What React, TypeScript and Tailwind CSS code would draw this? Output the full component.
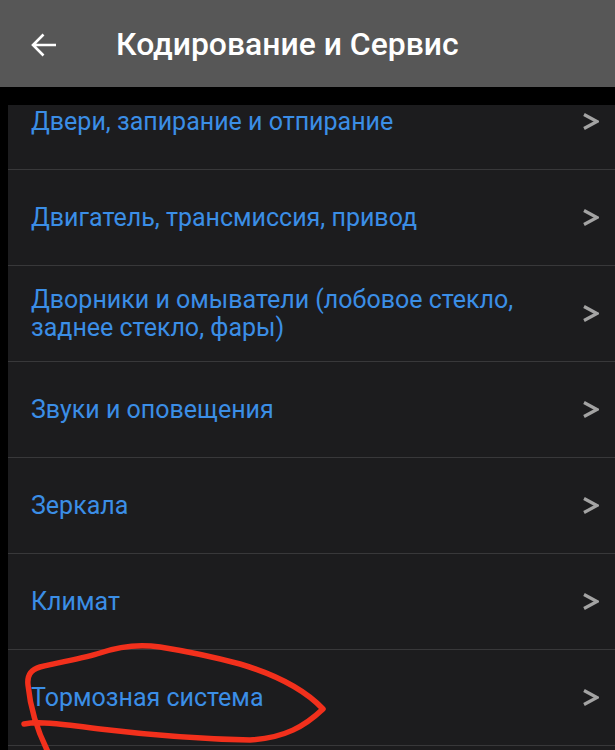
import React from 'react';

const items: string[][] = [
  ['Двери, запирание и отпирание'],
  ['Двигатель, трансмиссия, привод'],
  ['Дворники и омыватели (лобовое стекло,', 'заднее стекло, фары)'],
  ['Звуки и оповещения'],
  ['Зеркала'],
  ['Климат'],
  ['Тормозная система'],
];

const Chevron = () => (
  <svg width="17" height="19" viewBox="0 0 17 19" fill="none" className="shrink-0">
    <polyline points="2,2.5 15,9.5 2,16.5" stroke="#a3a3a3" strokeWidth="3.2" strokeLinejoin="miter" />
  </svg>
);

const Row = ({ lines }: { lines: string[] }) => (
  <div className="h-[96px] flex items-center justify-between pl-[23px] pr-[16px] border-b border-[#38383a]">
    <div className="text-[25px] leading-[28px] text-[#3b8ee6]">
      {lines.map((l) => (
        <div key={l}>{l}</div>
      ))}
    </div>
    <Chevron />
  </div>
);

export default function App() {
  return (
    <div
      className="relative w-[615px] h-[750px] overflow-hidden bg-black"
      style={{ fontFamily: 'Roboto, "Noto Sans", sans-serif' }}
    >
      <header className="h-[87px] bg-[#575757] flex items-center">
        <svg width="26" height="24" viewBox="0 0 26 24" fill="none" className="ml-[31px] mt-[2px]">
          <path d="M25 12H2M12.5 1.5L2 12l10.5 10.5" stroke="#fff" strokeWidth="2.6" />
        </svg>
        <h1 className="ml-[59px] mt-[2px] text-[31.9px] font-medium text-white">
          Кодирование и Сервис
        </h1>
      </header>

      <div className="pt-[18px] pl-[8px]">
        <div className="h-[700px] bg-[#1c1c1e] overflow-hidden">
          <div className="-mt-[31px]">
            {items.map((lines) => (
              <Row key={lines[0]} lines={lines} />
            ))}
          </div>
        </div>
      </div>

      {/* red hand-drawn annotation */}
      <svg
        className="absolute top-0 left-0 pointer-events-none"
        width="615"
        height="750"
        viewBox="0 0 615 750"
        fill="none"
      >
        <path
          d="M24 724 C40 721 60 724 100 729 C150 735 200 739 250 740 C285 738 305 726 323 709 C305 690 280 676 240 664 C210 656 185 651 160 647 C140 644 120 646 100 653 C85 658 60 662 40 667 C30 670 27 676 28 685 C30 705 36 728 48 752"
          stroke="#f2301c"
          strokeWidth="5.5"
          strokeLinecap="round"
          strokeLinejoin="round"
        />
      </svg>
    </div>
  );
}
